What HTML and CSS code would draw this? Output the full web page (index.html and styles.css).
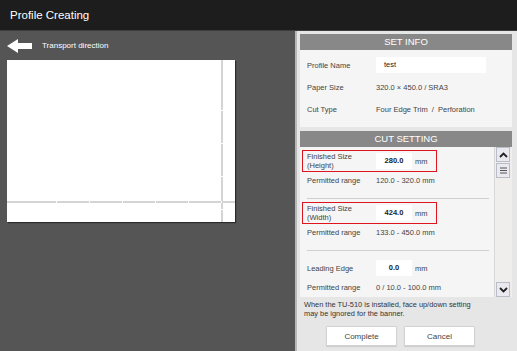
FILE: index.html
```html
<!DOCTYPE html>
<html lang="en">
  <head>
    <meta charset="UTF-8" />
    <title>Profile Creating</title>
    <link rel="stylesheet" href="styles.css">
  </head>
  <body>
    <header class="titlebar">Profile Creating</header>
    <main class="screen">
      <section class="preview">
        <div class="direction">
          <svg width="25" height="14" viewBox="0 0 25 14">
            <path d="M0 7 L11 0 L11 4 L25 4 L25 10 L11 10 L11 14 Z" fill="#fff" />
          </svg>
          <span>Transport direction</span>
        </div>
        <div class="paper">
          <span class="trim-v"></span>
          <span class="trim-h"></span>
        </div>
      </section>

      <aside class="panel">
        <div class="box">
          <div class="box-head">SET INFO</div>
          <div class="info-body">
            <div class="row">
              <span class="label">Profile Name</span>
              <span class="field wide">test</span>
            </div>
            <div class="row">
              <span class="label">Paper Size</span>
              <span class="value">320.0 × 450.0 / SRA3</span>
            </div>
            <div class="row">
              <span class="label">Cut Type</span>
              <span class="value">Four Edge Trim&nbsp; / &nbsp;Perforation</span>
            </div>
          </div>
        </div>

        <div class="box cut">
          <div class="box-head">CUT SETTING</div>
          <div class="cut-body">
            <div class="cut-list">
              <div class="row edit marked">
                <span class="label">Finished Size<br>(Height)</span>
                <span class="field num">280.0</span>
                <span class="unit">mm</span>
              </div>
              <div class="row range">
                <span class="label">Permitted range</span>
                <span class="value">120.0 - 320.0 mm</span>
              </div>
              <hr class="sep">
              <div class="row edit marked">
                <span class="label">Finished Size<br>(Width)</span>
                <span class="field num">424.0</span>
                <span class="unit">mm</span>
              </div>
              <div class="row range">
                <span class="label">Permitted range</span>
                <span class="value">133.0 - 450.0 mm</span>
              </div>
              <hr class="sep">
              <div class="row edit lead">
                <span class="label">Leading Edge</span>
                <span class="field num">0.0</span>
                <span class="unit">mm</span>
              </div>
              <div class="row range">
                <span class="label">Permitted range</span>
                <span class="value">0 / 10.0 - 100.0 mm</span>
              </div>
            </div>
            <div class="scrollbar">
              <div class="sb-btn">
                <svg width="9" height="6" viewBox="0 0 9 6"><path d="M1 5 L4.5 1.5 L8 5" fill="none" stroke="#222" stroke-width="1.8" /></svg>
              </div>
              <div class="sb-btn thumb">
                <svg width="7" height="7" viewBox="0 0 7 7"><path d="M0 1 H7 M0 3.5 H7 M0 6 H7" stroke="#555" stroke-width="1.2" /></svg>
              </div>
              <div class="sb-track"></div>
              <div class="sb-btn">
                <svg width="9" height="6" viewBox="0 0 9 6"><path d="M1 1 L4.5 4.5 L8 1" fill="none" stroke="#222" stroke-width="1.8" /></svg>
              </div>
            </div>
          </div>
        </div>

        <p class="note">When the TU-510 is installed, face up/down setting<br>may be ignored for the banner.</p>

        <div class="actions">
          <button>Complete</button>
          <button>Cancel</button>
        </div>
      </aside>
    </main>
  </body>
</html>
```

FILE: styles.css
```css
* {
  box-sizing: border-box;
}
body {
  margin: 0;
  width: 517px;
  height: 351px;
  overflow: hidden;
  font-family: "Liberation Sans", Arial, sans-serif;
  background: #555555;
}
.titlebar {
  height: 31px;
  line-height: 30px;
  padding-left: 10px;
  background: #1d1d1d;
  border-bottom: 1px solid #3c3c3c;
  color: #ffffff;
  font-size: 11.5px;
}
.screen {
  display: flex;
  height: 320px;
}
.preview {
  flex: 1;
  padding: 0 7px;
}
.direction {
  display: flex;
  align-items: center;
  gap: 10px;
  height: 29px;
  color: #ffffff;
  font-size: 8px;
}
.paper {
  position: relative;
  width: 228px;
  height: 162px;
  background: #ffffff;
  box-shadow: 1px 1px 1px #2a2a2a;
}
.trim-v {
  position: absolute;
  left: 214px;
  top: 0;
  width: 2px;
  height: 100%;
  background: repeating-linear-gradient(to bottom, #d4d4d4 0 32px, #ffffff 32px 33px);
  background-position: 0 18px;
}
.trim-h {
  position: absolute;
  left: 0;
  top: 141px;
  width: 100%;
  height: 2px;
  background: repeating-linear-gradient(to right, #d4d4d4 0 32px, #ffffff 32px 33px);
  background-position: 17px 0;
}
.panel {
  width: 222px;
  padding: 3px 5px 0 3px;
  background: #e6e6e6;
  border-left: 2px solid #b8b8b8;
}
.box {
  background: #f5f5f5;
}
.box-head {
  height: 16px;
  line-height: 16px;
  background: #888888;
  color: #ffffff;
  font-size: 9.5px;
  text-align: center;
}
.info-body {
  padding: 4px 0 7px;
}
.row {
  display: flex;
  align-items: center;
  height: 22px;
  padding-left: 7px;
  font-size: 7.5px;
  color: #444;
}
.label {
  flex: none;
  width: 69px;
  line-height: 9px;
}
.field {
  flex: none;
  height: 16px;
  line-height: 16px;
  background: #ffffff;
  color: #222;
}
.field.wide {
  width: 110px;
  padding-left: 8px;
}
.cut {
  margin-top: 4px;
}
.cut-body {
  display: flex;
  height: 150px;
}
.cut-list {
  flex: 1;
  overflow: hidden;
}
.row.marked {
  width: 135px;
  height: 22px;
  margin: 3px 0 0 2px;
  padding-left: 4px;
  border: 1px solid #e0141e;
}
.row.range {
  height: 17px;
}
.row.lead {
  margin-top: 6px;
}
.field.num {
  width: 36px;
  text-align: center;
  font-weight: bold;
}
.unit {
  margin-left: 3px;
}
.sep {
  margin: 9px 5px 2px 7px;
  border: 0;
  border-top: 1px solid #cfcfcf;
}
.scrollbar {
  display: flex;
  flex-direction: column;
  width: 18px;
  padding-right: 1px;
  background: #efeeec;
  border-left: 1px solid #d8d8d8;
}
.sb-btn {
  display: flex;
  align-items: center;
  justify-content: center;
  height: 15px;
  margin: 0 1px;
  background: #e9e9ef;
  border: 1px solid #b9bdc8;
}
.sb-btn.thumb {
  margin-top: 1px;
}
.sb-track {
  flex: 1;
}
.note {
  margin: 3px 0 0 4px;
  font-size: 7.4px;
  line-height: 9px;
  color: #333;
}
.actions {
  display: flex;
  gap: 7px;
  margin: 8px 0 0 26px;
}
.actions button {
  width: 71px;
  height: 20px;
  background: #ffffff;
  border: 1px solid #d2d2d2;
  border-radius: 1px;
  box-shadow: 0 1px 1px rgba(0, 0, 0, 0.12);
  font-family: "Liberation Sans", Arial, sans-serif;
  font-size: 8px;
  color: #444;
}
```
